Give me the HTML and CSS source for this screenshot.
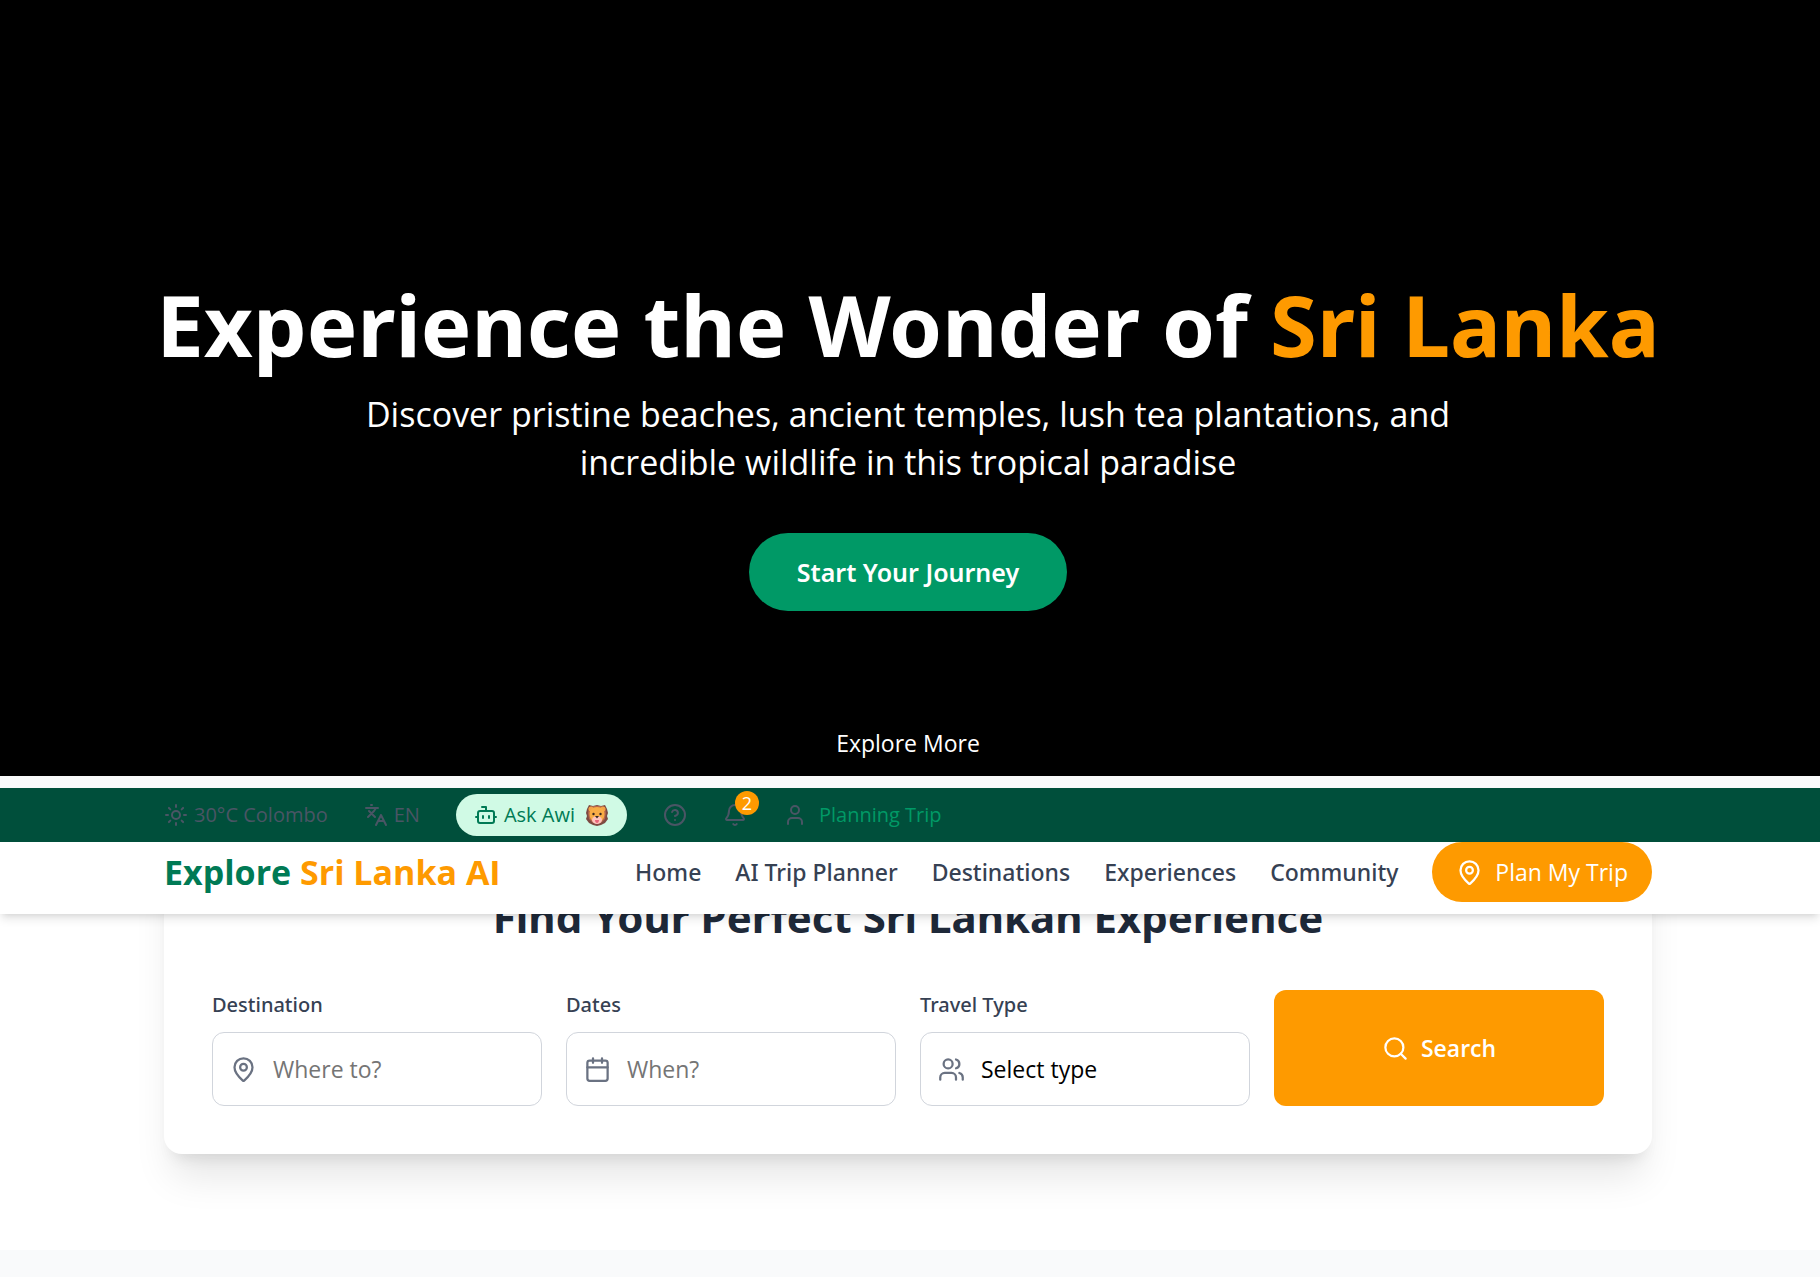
FILE: index.html
```html
<!DOCTYPE html>
<html lang="en">
<head>
<meta charset="utf-8">
<meta name="viewport" content="width=device-width, initial-scale=1">
<title>Explore Sri Lanka AI</title>
<link rel="stylesheet" href="styles.css">
</head>
<body>
<section class="hero">
  <h1 class="hero-title">Experience the Wonder of <span class="accent">Sri Lanka</span></h1>
  <p class="hero-text">Discover pristine beaches, ancient temples, lush tea plantations, and incredible wildlife in this tropical paradise</p>
  <button class="hero-button" type="button">Start Your Journey</button>
  <a class="hero-more" href="#search">Explore More</a>
</section>

<header class="header">
  <div class="topbar">
    <div class="container topbar-row">
      <span class="topbar-item">
        <svg class="icon" viewBox="0 0 24 24"><circle cx="12" cy="12" r="4"/><path d="M12 2v2M12 20v2M4.93 4.93l1.41 1.41M17.66 17.66l1.41 1.41M2 12h2M20 12h2M6.34 17.66l-1.41 1.41M19.07 4.93l-1.41 1.41"/></svg>
        30°C Colombo
      </span>
      <button class="topbar-item" type="button">
        <svg class="icon" viewBox="0 0 24 24"><path d="m5 8 6 6M4 14l6-6 2-3M2 5h12M7 2h1M22 22l-5-10-5 10M14 18h6"/></svg>
        EN
      </button>
      <button class="topbar-item ask" type="button">
        <svg class="icon" viewBox="0 0 24 24"><path d="M12 8V4H8"/><rect width="16" height="12" x="4" y="8" rx="2"/><path d="M2 14h2M20 14h2M15 13v2M9 13v2"/></svg>
        Ask Awi
        <svg class="lion" viewBox="0 0 24 24" role="img" aria-label="Lion"><path fill="#7d4a42" d="M4 2 8 3 12 2 16 3 20 2 22 6 23 10 22 13 23 16 20 20 16 22 12 23 8 22 4 20 1 16 2 13 1 10 2 6Z"/><path fill="#b5674c" d="M4 4 9 3 12 3 15 3 20 4 21 10 20 16 16 20 8 20 4 16 3 10Z"/><circle cx="6" cy="6" r="2.500" fill="#f2a348"/><circle cx="18" cy="6" r="2.500" fill="#f2a348"/><path fill="#f8ad45" d="M12 4c5 0 7.500 3 7.500 7s-2 8-7.500 8-7.500-4-7.500-8 2.500-7 7.500-7Z"/><ellipse cx="12" cy="17" rx="5" ry="4" fill="#ffc4bd"/><circle cx="8.500" cy="11" r="1.200" fill="#35251f"/><circle cx="15.500" cy="11" r="1.200" fill="#35251f"/><path fill="#35251f" d="M10 13h4l-2 2.500Z"/><path fill="#e9657b" d="M10 17h4c0 2-1 3-2 3s-2-1-2-3Z"/></svg>
      </button>
      <button class="topbar-item" type="button" aria-label="Help">
        <svg class="icon" viewBox="0 0 24 24"><circle cx="12" cy="12" r="10"/><path d="M9.09 9a3 3 0 0 1 5.83 1c0 2-3 3-3 3M12 17h.01"/></svg>
      </button>
      <button class="topbar-item bell" type="button" aria-label="Notifications">
        <svg class="icon" viewBox="0 0 24 24"><path d="M10.268 21a2 2 0 0 0 3.464 0"/><path d="M3.262 15.326A1 1 0 0 0 4 17h16a1 1 0 0 0 .74-1.673C19.410 13.956 18 12.499 18 8A6 6 0 0 0 6 8c0 4.499-1.411 5.956-2.738 7.326"/></svg>
        <span class="badge">2</span>
      </button>
      <button class="topbar-item user" type="button">
        <svg class="icon" viewBox="0 0 24 24"><path d="M19 21v-2a4 4 0 0 0-4-4H9a4 4 0 0 0-4 4v2"/><circle cx="12" cy="7" r="4"/></svg>
        <span class="status">Planning Trip</span>
      </button>
    </div>
  </div>
  <div class="navbar">
    <div class="container nav-row">
      <a class="logo" href="#">Explore <span class="accent">Sri Lanka AI</span></a>
      <nav class="nav">
        <a href="#">Home</a>
        <a href="#">AI Trip Planner</a>
        <a href="#">Destinations</a>
        <a href="#">Experiences</a>
        <a href="#">Community</a>
        <button class="plan" type="button">
          <svg class="icon icon-lg" viewBox="0 0 24 24"><path d="M20 10c0 4.993-5.539 10.193-7.399 11.799a1 1 0 0 1-1.202 0C9.539 20.193 4 14.993 4 10a8 8 0 0 1 16 0"/><circle cx="12" cy="10" r="3"/></svg>
          Plan My Trip
        </button>
      </nav>
    </div>
  </div>
</header>

<section class="search" id="search">
  <div class="container">
    <form class="card">
      <h2 class="card-title">Find Your Perfect Sri Lankan Experience</h2>
      <div class="fields">
        <div class="field">
          <label for="destination">Destination</label>
          <div class="control">
            <svg class="icon icon-lg" viewBox="0 0 24 24"><path d="M20 10c0 4.993-5.539 10.193-7.399 11.799a1 1 0 0 1-1.202 0C9.539 20.193 4 14.993 4 10a8 8 0 0 1 16 0"/><circle cx="12" cy="10" r="3"/></svg>
            <input id="destination" type="text" placeholder="Where to?">
          </div>
        </div>
        <div class="field">
          <label for="dates">Dates</label>
          <div class="control">
            <svg class="icon icon-lg" viewBox="0 0 24 24"><path d="M8 2v4M16 2v4"/><rect width="18" height="18" x="3" y="4" rx="2"/><path d="M3 10h18"/></svg>
            <input id="dates" type="text" placeholder="When?">
          </div>
        </div>
        <div class="field">
          <label for="type">Travel Type</label>
          <div class="control">
            <svg class="icon icon-lg" viewBox="0 0 24 24"><path d="M16 21v-2a4 4 0 0 0-4-4H6a4 4 0 0 0-4 4v2"/><circle cx="9" cy="7" r="4"/><path d="M22 21v-2a4 4 0 0 0-3-3.870M16 3.130a4 4 0 0 1 0 7.750"/></svg>
            <select id="type"><option>Select type</option></select>
          </div>
        </div>
        <button class="submit" type="submit">
          <svg class="icon icon-lg" viewBox="0 0 24 24"><circle cx="11" cy="11" r="8"/><path d="m21 21-4.340-4.340"/></svg>
          Search
        </button>
      </div>
    </form>
  </div>
</section>
</body>
</html>
```
FILE: styles.css
```css
* {
  box-sizing: border-box;
  margin: 0;
}

body {
  background: #f9fafb;
  color: #000;
  font: 400 23px/36px "Open Sans", "Noto Sans", sans-serif;
}

a {
  color: inherit;
  text-decoration: none;
}

button,
input,
select {
  padding: 0;
  border: 0;
  background: none;
  color: inherit;
  font: inherit;
}

.container {
  max-width: 1536px;
  margin: 0 auto;
  padding: 0 24px;
}

.accent {
  color: #fe9a00;
}

.icon {
  flex: none;
  width: 24px;
  height: 24px;
  fill: none;
  stroke: currentColor;
  stroke-width: 2;
  stroke-linecap: round;
  stroke-linejoin: round;
}

.icon-lg {
  width: 27px;
  height: 27px;
}

.hero-title,
.hero-button,
.card-title,
.nav a,
.field label {
  font-family: "Noto Sans", "Open Sans", sans-serif;
}

/* Hero */

.hero {
  display: flex;
  flex-direction: column;
  align-items: center;
  padding: 279px 4px 15px 0;
  background: #000;
  color: #fff;
  text-align: center;
}

.hero-title {
  font-size: 85px;
  font-weight: 700;
  line-height: 90px;
}

.hero-text {
  max-width: 1152px;
  margin: 21px 0 47px;
  font-size: 34px;
  line-height: 48px;
}

.hero-button {
  padding: 18px 48px;
  border-radius: 39px;
  background: #009966;
  font-size: 25px;
  font-weight: 600;
  line-height: 42px;
}

.hero-more {
  margin-top: 114px;
}

/* Header */

.header {
  position: relative;
  z-index: 1;
  margin-top: 12px;
  background: #fff;
  box-shadow: 0 6px 9px -1px rgb(0 0 0 / 10%), 0 3px 6px -3px rgb(0 0 0 / 10%);
}

.topbar,
.navbar {
  padding-right: 4px;
}

.topbar {
  background: #004f3b;
  color: #4a5565;
  font-size: 20px;
  line-height: 30px;
}

.topbar-row {
  display: flex;
  align-items: center;
  gap: 36px;
  height: 54px;
}

.topbar-item {
  display: flex;
  align-items: center;
  gap: 6px;
}

.ask {
  padding: 6px 18px;
  border-radius: 21px;
  background: #d0fae5;
  color: #007a55;
}

.lion {
  width: 24px;
  height: 24px;
  margin-left: 4px;
}

.bell {
  position: relative;
}

.badge {
  position: absolute;
  top: -12px;
  right: -12px;
  width: 24px;
  height: 24px;
  border-radius: 50%;
  background: #fe9a00;
  color: #fff;
  font-size: 18px;
  line-height: 24px;
  text-align: center;
}

.user {
  gap: 12px;
}

.status {
  color: #009966;
}

.nav-row {
  display: flex;
  align-items: center;
  justify-content: space-between;
  padding-bottom: 12px;
}

.logo {
  color: #007a55;
  font-size: 34px;
  font-weight: 700;
  line-height: 48px;
}

.nav {
  display: flex;
  align-items: center;
  gap: 34px;
  color: #364153;
  font-weight: 500;
}

.plan {
  display: flex;
  align-items: center;
  gap: 12px;
  padding: 12px 24px;
  border-radius: 30px;
  background: #fe9a00;
  color: #fff;
  font-weight: 400;
}

/* Search */

.search {
  padding: 0 4px 96px 0;
  background: #fff;
}

.card {
  margin-top: -72px;
  padding: 48px;
  border-radius: 18px;
  background: #fff;
  box-shadow: 0 30px 38px -8px rgb(0 0 0 / 10%), 0 12px 15px -9px rgb(0 0 0 / 10%);
}

.card-title {
  margin-bottom: 46px;
  color: #1e2939;
  font-size: 42px;
  font-weight: 700;
  line-height: 54px;
  text-align: center;
}

.fields {
  display: grid;
  grid-template-columns: repeat(4, minmax(0, 1fr));
  gap: 24px;
}

.field label {
  display: block;
  margin-bottom: 12px;
  color: #364153;
  font-size: 20px;
  font-weight: 500;
  line-height: 30px;
}

.control {
  display: flex;
  align-items: center;
  gap: 16px;
  padding: 18px 17px;
  border: 1px solid #d1d5dc;
  border-radius: 12px;
}

.control .icon {
  color: #6a7282;
}

.control input,
.control select {
  flex: 1;
  min-width: 0;
  height: 36px;
  appearance: none;
  outline: none;
}

.control input::placeholder {
  color: #757575;
}

.submit {
  display: flex;
  align-items: center;
  justify-content: center;
  gap: 12px;
  border-radius: 12px;
  background: #fe9a00;
  color: #fff;
  font-weight: 600;
}
```
